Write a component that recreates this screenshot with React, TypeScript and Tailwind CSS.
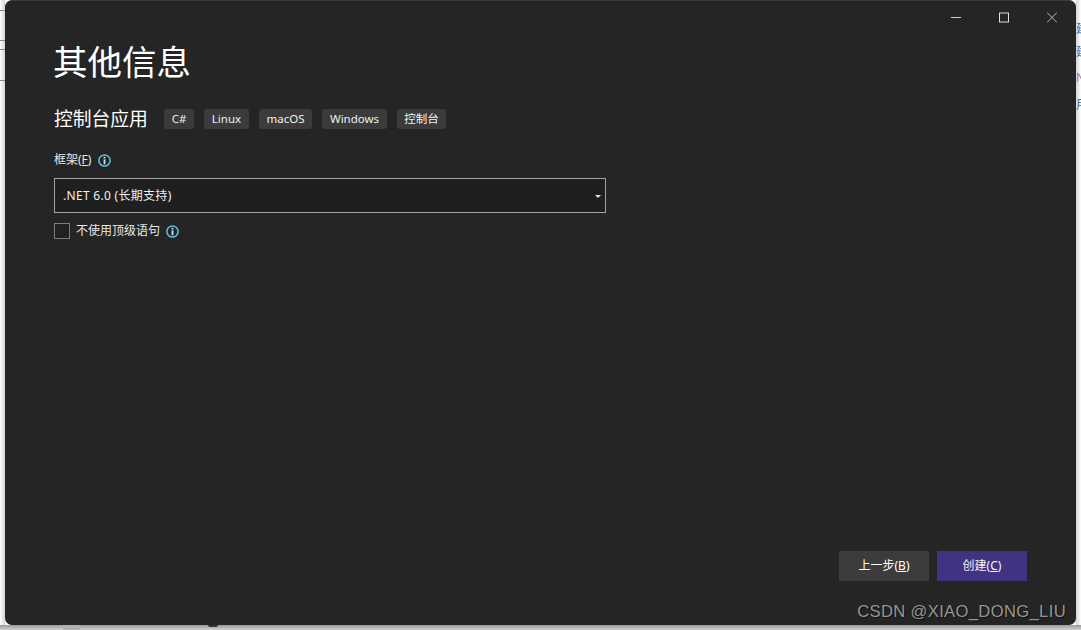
const font = "[font-family:'Noto_Sans','Noto_Sans_CJK_SC',sans-serif]";

const tags = [
  { label: "C#", width: "w-[30px]" },
  { label: "Linux", width: "w-[45px]" },
  { label: "macOS", width: "w-[53px]" },
  { label: "Windows", width: "w-[65px]" },
  { label: "控制台", width: "w-[49px]" },
];

function InfoIcon() {
  return (
    <svg width="13" height="13" viewBox="0 0 13 13" fill="none" className="shrink-0">
      <circle cx="6.5" cy="6.5" r="5.6" stroke="#5cc3e8" strokeWidth="1.5" />
      <rect x="5.6" y="2.8" width="1.8" height="1.7" fill="#bfe8f5" />
      <rect x="5.6" y="5.4" width="1.8" height="4.8" fill="#bfe8f5" />
    </svg>
  );
}

function WindowControls() {
  return (
    <div className="flex justify-end h-[39px] pr-[19px] pt-[11px] gap-[38px]">
      <svg width="10" height="11" viewBox="0 0 10 11" fill="none">
        <path d="M0 5.5H10" stroke="#d0d0d0" strokeWidth="1" />
      </svg>
      <svg width="10" height="11" viewBox="0 0 10 11" fill="none">
        <rect x="0.5" y="1" width="9" height="9" stroke="#e0e0e0" strokeWidth="1" />
      </svg>
      <svg width="10" height="11" viewBox="0 0 10 11" fill="none">
        <path d="M0 0.5L10 10.5M10 0.5L0 10.5" stroke="#c8c8c8" strokeWidth="0.9" />
      </svg>
    </div>
  );
}

export default function App() {
  return (
    <div className={`h-[630px] w-[1081px] overflow-hidden bg-[#c8c8c8] flex flex-col ${font}`}>
      <div className="flex h-[625px] bg-white">
        {/* what shows of the page behind the dialog */}
        <div className="w-[5px] shrink-0 flex flex-col bg-gradient-to-r from-white to-[#d4d4d4]">
          <div className="h-[10px] border-b border-[#8a8a8a] box-content" />
          <div className="h-[29px] border-b border-[#8a8a8a] box-content" />
          <div className="h-[8px] border-b border-[#8a8a8a] box-content" />
          <div className="h-[30px] border-b border-[#8a8a8a] box-content" />
        </div>

        <div className="relative flex-1 min-w-0 rounded-[7px] bg-[#252525] border-t border-[#3a3a3a] flex flex-col text-white">
          <WindowControls />

          <div className="pl-[49px]">
            <h1 className="text-[34.5px] leading-[44px] h-[44px] font-normal -ml-[1px]">其他信息</h1>

            <div className="flex items-center mt-[25px] h-[20px]">
              <span className="text-[18.8px] leading-[20px] w-[110px] shrink-0">控制台应用</span>
              <div className="flex gap-[10px]">
                {tags.map((tag) => (
                  <span
                    key={tag.label}
                    className={`${tag.width} h-[20px] rounded-[3px] bg-[#3b3b3b] text-[11.5px] leading-[20px] text-center text-[#f0f0f0]`}
                  >
                    {tag.label}
                  </span>
                ))}
              </div>
            </div>

            <div className="flex items-center gap-[7px] mt-[22px] h-[18px] text-[12px] text-[#e8e8e8]">
              <span>
                框架(<span className="underline">F</span>)
              </span>
              <InfoIcon />
            </div>

            <div className="relative flex items-center mt-[9px] w-[552px] h-[35px] bg-[#1f1f1f] border border-[#a3a3a3] pl-[8px] text-[12px] tracking-[0.3px] text-[#f0f0f0]">
              .NET 6.0 (长期支持)
              <span className="absolute right-[4px] top-[16px] w-0 h-0 border-x-[3px] border-x-transparent border-t-[3px] border-t-[#e0e0e0]" />
            </div>

            <div className="flex items-center mt-[10px] h-[16px] text-[12px] text-[#e8e8e8]">
              <span className="w-[16px] h-[16px] border border-[#7d7d7d] bg-[#222222] mr-[6px]" />
              <span>不使用顶级语句</span>
              <span className="ml-[6px] pt-[1px]">
                <InfoIcon />
              </span>
            </div>
          </div>

          <div className="mt-auto flex justify-end gap-[8px] pr-[49px] pb-[44px] text-[12px]">
            <button className="w-[90px] h-[30px] bg-[#3c3c3c] text-white">
              上一步(<span className="underline">B</span>)
            </button>
            <button className="w-[90px] h-[30px] bg-[#413283] text-[#f4f4f4]">
              创建(<span className="underline">C</span>)
            </button>
          </div>

          {/* CSDN watermark sits on top of the screenshot */}
          <span className="absolute right-[10px] bottom-[2px] text-[16.6px] leading-[22px] tracking-[0.35px] text-[#959595] [text-shadow:1px_1px_1px_#111111] [font-family:'Liberation_Sans',sans-serif]">
            CSDN @XIAO_DONG_LIU
          </span>
        </div>

        <div className="w-[5px] shrink-0 flex flex-col items-start overflow-hidden text-[12px] leading-[14px] pt-[22px] text-[#1f6fc0] whitespace-nowrap bg-gradient-to-r from-[#d4d4d4] to-white">
          <span className="h-[23px]">建</span>
          <span className="h-[26px]">建</span>
          <span className="h-[27px] text-[#b070a8]">N</span>
          <span>用</span>
        </div>
      </div>
      <div className="h-[5px] shrink-0 flex bg-gradient-to-b from-[#9a9a9a] to-[#d2d2d2]">
        <div className="ml-[63px] w-[17px] bg-[#b0b0b0]" />
        <div className="ml-[128px] mt-0 w-[10px] h-[2px] bg-[#333333] rounded-b-full" />
      </div>
    </div>
  );
}
